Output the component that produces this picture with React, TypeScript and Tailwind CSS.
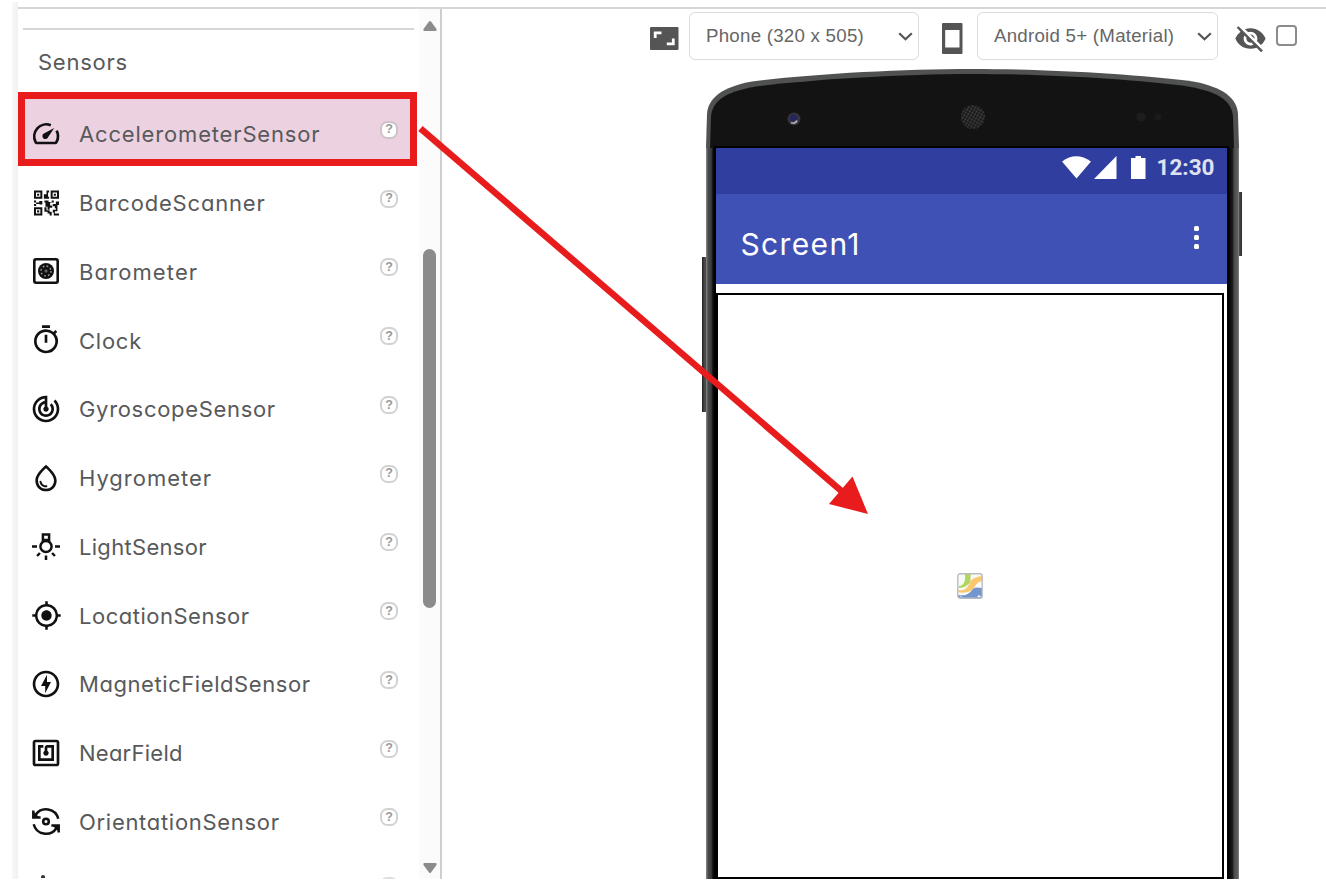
import type { ReactNode } from "react";
import {
  MdOutlineTimer,
  MdTrackChanges,
  MdOutlineWaterDrop,
  MdMyLocation,
  MdOutlineOfflineBolt,
  MdNfc,
  MdVisibilityOff,
} from "react-icons/md";

function QrIcon() {
  return (
    <svg width="25" height="26" viewBox="0 0 24 24" fill="#111">
      <path
        fillRule="evenodd"
        d="M0 0h8v8H0zM1.9 1.9v4.2h4.2V1.9zM16 0h8v8h-8zM17.9 1.9v4.2h4.2V1.9zM0 16h8v8H0zM1.9 17.9v4.2h4.2v-4.2z"
      />
      <path d="M3 3h2v2H3zM19 3h2v2h-2zM3 19h2v2H3zM12 0h2.500v2H12zM9.500 3.500h2.500V2h1.500v4h1v2H9.500zM0 9.500h2v2h3v-1.500h3v1.500h2V9.500h4v1.500h3V9.500h2v2h-3.500v3h2v2h-2.500v2h-2v-3h-2v-4H8v2H5.500V13H2v-1.500H0zM0 13h2v1.800H0zM18 13h3v-2.500h3V14h-1.500v3H20v-2h-2zM10 16h2v3h3v1.500h2V24h-2v-2h-2v-1.500h-3zM18 18.500h3V17h1.500v3H20v2h4v2h-5v-3h-1z" />
    </svg>
  );
}

function SpeedIcon() {
  return (
    <svg width="28" height="23" viewBox="0 0 28 23" fill="none" stroke="#111" strokeWidth="2.700">
      <path d="M18.800 3.200A12.200 12.200 0 0 0 3.600 20.200Q4 21 5 21H23Q24 21 24.400 20.200A12.200 12.200 0 0 0 24.600 8.600" />
      <path d="M22.200 6 16.200 15A3 3 0 1 1 12.400 11.200Z" fill="#111" stroke="none" />
    </svg>
  );
}

function BarometerIcon() {
  return (
    <svg width="26" height="26" viewBox="0 0 24 24" fill="none" stroke="#111">
      <rect x="1.200" y="1.200" width="21.600" height="21.600" rx="1.600" strokeWidth="2.400" />
      <circle cx="12" cy="12" r="7.400" fill="#111" stroke="none" />
      <circle cx="12" cy="12" r="4.600" stroke="#999" strokeWidth="1.300" strokeDasharray="1.600 2" />
      <circle cx="12" cy="12" r="1" stroke="#999" strokeWidth=".7" />
    </svg>
  );
}

function LampIcon() {
  return (
    <svg width="28" height="27" viewBox="0 0 28 27" fill="none" stroke="#111" strokeWidth="2.500">
      <circle cx="14" cy="13.500" r="5.600" />
      <path d="M10.900 9V1.600h6.200V9" />
      <path d="M10.500 7h7" />
      <path d="M0 13.500h5M23 13.500h5M14 22.500V27M7.900 20l-2.800 3M20.100 20l2.800 3" />
    </svg>
  );
}

function RotateIcon() {
  return (
    <svg width="28" height="29" viewBox="0 0 28 29" fill="none" stroke="#111" strokeWidth="2.500">
      <circle cx="14" cy="14.500" r="2.800" strokeWidth="2.600" />
      <path d="M26.300 11.800A12.600 12.600 0 0 0 3.500 8" />
      <path d="M1.700 17.200A12.600 12.600 0 0 0 24.500 21" />
      <path d="M1.300 3.500V10.500H8.600" />
      <path d="M26.700 25.500V18.500H19.400" />
      <path d="M1 4v7h7zM27 25v-7h-7z" fill="#111" stroke="none" />
    </svg>
  );
}

type Item = { label: string; icon: ReactNode; track: string; selected?: boolean };

const ITEMS: Item[] = [
  { label: "AccelerometerSensor", icon: <SpeedIcon />, track: "tracking-[0.830px]", selected: true },
  { label: "BarcodeScanner", icon: <QrIcon />, track: "tracking-[0.820px]" },
  { label: "Barometer", icon: <BarometerIcon />, track: "tracking-[1.120px]" },
  { label: "Clock", icon: <MdOutlineTimer size={32} />, track: "tracking-[0.750px]" },
  { label: "GyroscopeSensor", icon: <MdTrackChanges size={32} />, track: "tracking-[0.680px]" },
  { label: "Hygrometer", icon: <MdOutlineWaterDrop size={32} />, track: "tracking-[0.980px]" },
  { label: "LightSensor", icon: <LampIcon />, track: "tracking-[0.300px]" },
  { label: "LocationSensor", icon: <MdMyLocation size={31} />, track: "tracking-[0.510px]" },
  { label: "MagneticFieldSensor", icon: <MdOutlineOfflineBolt size={32} />, track: "tracking-[0.570px]" },
  { label: "NearField", icon: <MdNfc size={32} />, track: "tracking-[0.250px]" },
  { label: "OrientationSensor", icon: <RotateIcon />, track: "tracking-[0.700px]" },
];

function Help({ selected }: { selected?: boolean }) {
  return (
    <span
      className={`mb-[7px] flex h-[18px] w-[18px] items-center justify-center rounded-[7.500px] border-2 font-['Liberation_Sans',sans-serif] text-[12.500px] leading-none font-bold text-[#999] ${
        selected ? "border-[#cdc3c9] bg-white" : "border-[#d2d2d2]"
      }`}
    >
      ?
    </span>
  );
}

function PaletteRow({ label, icon, track, selected }: Item) {
  return (
    <li
      className={`flex shrink-0 items-center pr-[17px] pl-[11px] mr-[4px] ${
        selected ? "mb-[3.750px] h-[65px] bg-[#ecd1e1] pt-[3px]" : "h-[68.750px]"
      }`}
    >
      <span className="mt-px flex w-[34px] shrink-0 items-center justify-center text-[#111] [&_svg]:overflow-visible">
        {icon}
      </span>
      <span className={`mt-[2px] ml-[16px] flex-1 text-[22px] leading-none ${track}`}>{label}</span>
      <Help selected={selected} />
    </li>
  );
}

function Select({ label, className }: { label: string; className: string }) {
  return (
    <div
      className={`flex h-[48px] items-center justify-between rounded-[6px] border-[1.500px] border-[#dcdcdc] bg-white font-['Liberation_Sans',Arial,sans-serif] text-[18.700px] text-[#666] ${className}`}
    >
      <span className="whitespace-nowrap">{label}</span>
      <svg width="15" height="9" viewBox="0 0 15 9" fill="none" stroke="#555" strokeWidth="2.200">
        <path d="M1.200 1.200 7.500 7.300 13.800 1.200" />
      </svg>
    </div>
  );
}

function PhoneShell() {
  return (
    <svg className="absolute top-0 left-0" width="544" height="812" viewBox="700 67 544 812">
      <defs>
        <linearGradient id="rail" x1="706" x2="1239" y1="0" y2="0" gradientUnits="userSpaceOnUse">
          <stop offset="0" stopColor="#8b8b8b" />
          <stop offset=".004" stopColor="#4a4b4c" />
          <stop offset=".010" stopColor="#37393a" />
          <stop offset=".013" stopColor="#0d0d0d" />
          <stop offset=".018" stopColor="#000" />
          <stop offset=".980" stopColor="#000" />
          <stop offset=".988" stopColor="#1c1c1c" />
          <stop offset=".991" stopColor="#4c4c4e" />
          <stop offset=".997" stopColor="#5a5a5c" />
          <stop offset="1" stopColor="#888" />
        </linearGradient>
        <linearGradient id="side" x1="0" x2="1" y1="0" y2="0">
          <stop offset="0" stopColor="#222" />
          <stop offset=".5" stopColor="#505051" />
          <stop offset="1" stopColor="#2c2c2c" />
        </linearGradient>
        <pattern id="mesh" width="3" height="3" patternUnits="userSpaceOnUse" patternTransform="rotate(30)">
          <rect width="3" height="3" fill="#181818" />
          <circle cx="1.500" cy="1.500" r=".9" fill="#4b4b4b" />
        </pattern>
      </defs>
      <rect x="702" y="257" width="6" height="155" fill="url(#side)" />
      <rect x="1236" y="192" width="6" height="64" fill="url(#side)" />
      <path d="M706 879V147H1239V879Z" fill="url(#rail)" />
      <path
        d="M706 148L707 114C708 98 722 87 752 81.500C810 74 900 69 972 69S1135 74 1193 81.500C1223 87 1237 98 1238 114L1239 148Z"
        fill="#505151"
      />
      <path
        d="M710 148L711 117C712 101 725 92 756 86.500C812 79.500 900 74 972 74S1133 79 1188 86.500C1219 92 1232 101 1233 117L1234 148Z"
        fill="#131313"
      />
      <path d="M714 879V146H1229V879Z" fill="#000" />
      <circle cx="794" cy="119" r="6.500" fill="#36363a" />
      <circle cx="793.500" cy="118" r="3.500" fill="#24245e" />
      <path d="M791 122.500q4 2 6-2" stroke="#aaa" strokeWidth="1.800" fill="none" />
      <circle cx="973" cy="117" r="12" fill="url(#mesh)" />
      <circle cx="1141" cy="117" r="4.500" fill="#1d1d1d" />
      <circle cx="1158" cy="117" r="3.500" fill="#1b1b1b" />
    </svg>
  );
}

function MapIcon() {
  return (
    <svg width="26" height="26" viewBox="0 0 26 26">
      <rect x="1" y="1" width="24" height="24" rx="2" fill="#f8faf8" />
      <path d="M8 1h6c-1 3 0 6-1 8s-5 6-11 6v-2c4 0 7-4 6-12z" fill="#b2d55c" />
      <path d="M1 17c6 1 9-1 11-6s6-7 13-8v5c-5 1-6 4-8 7s-9 6-16 4z" fill="#fbc76e" />
      <path d="M1 22c8 1 11-1 14-5 2-3 5-3 10-2v10H1z" fill="#7397cd" />
      <path d="m20 24 2-2 2 2zM4 24.500 3 23l2.500 1z" fill="#fff" />
      <rect x=".8" y=".8" width="24.400" height="24.400" rx="2.500" fill="none" stroke="#b9bcc0" strokeWidth="1.400" />
    </svg>
  );
}

export default function App() {
  return (
    <div className="relative h-[883px] w-[1326px] overflow-hidden bg-white font-['Inter','Open_Sans',sans-serif] text-[#58595b] [font-feature-settings:'cv11']">
      <div className="flex h-[879px]">
        <div className="mt-[2px] ml-[12px] w-[6px] shrink-0 bg-gradient-to-r from-[#f8f8f8] to-[#f1f1f1]" />
        <div className="mt-[7px] flex min-w-0 flex-1 border-t-2 border-[#d6d6d6]">
          <aside className="flex w-[424px] shrink-0 border-r-2 border-[#cfcfcf]">
            <div className="w-[401px] overflow-hidden">
              <div className="mt-[19px] mr-[5px] ml-[5px] h-[2px] bg-[#d6d6d6]" />
              <h2 className="flex h-[69px] items-center pb-[4px] pl-[20px] text-[22px] tracking-[0.750px]">Sensors</h2>
              <ul className="flex flex-col">
                {ITEMS.map((item) => (
                  <PaletteRow key={item.label} {...item} />
                ))}
                <li className="flex h-[28px] justify-between pr-[21px] pl-[22px]">
                  <span className="mt-[20px] ml-[1px] h-[3px] w-[4px] rounded-t bg-[#333]" />
                  <span className="mt-[22px] h-[18px] w-[18px] rounded-[7px] border-2 border-[#dedede]" />
                </li>
              </ul>
            </div>
            <div className="flex w-[21px] flex-col items-center bg-[#fbfbfb]">
              <svg className="mt-[11px] shrink-0" width="16" height="12" viewBox="0 0 16 12" fill="#8b8b8b">
                <path d="M7 1.500q1-1 2 0l5.500 7.500q.8 2-1 2h-11q-1.800 0-1-2z" />
              </svg>
              <div className="mt-[217px] h-[359px] w-[13px] rounded-full bg-[#8b8b8b]" />
              <svg className="mt-[254px] shrink-0" width="16" height="12" viewBox="0 0 16 12" fill="#8b8b8b">
                <path d="M7 10.500q1 1 2 0l5.500-7.500q.8-2-1-2h-11q-1.800 0-1 2z" />
              </svg>
            </div>
          </aside>

          <main className="flex min-w-0 flex-1 flex-col">
            <div className="flex h-[58px] shrink-0 items-start pt-[3px] pl-[208px]">
              <svg className="mt-[15px]" width="29" height="23" viewBox="0 0 29 23">
                <rect width="28.500" height="23" rx="1" fill="#555" />
                <path d="M5.200 11V5.800h6.300M23.300 11.500v5.300h-6.500" fill="none" stroke="#fff" strokeWidth="2.800" />
              </svg>
              <Select label="Phone (320 x 505)" className="ml-[10px] w-[230px] pr-[5px] pl-[16px] tracking-[0.250px]" />
              <svg className="mt-[11px] ml-[23px]" width="21" height="31" viewBox="0 0 21 31">
                <path fillRule="evenodd" fill="#555" d="M0 1q0-1 1-1h18.500q1 0 1 1v29q0 1-1 1H1q-1 0-1-1zM3.200 7v17.500h14.300V7z" />
              </svg>
              <Select label="Android 5+ (Material)" className="ml-[14px] w-[241px] pr-[5px] pl-[16px] tracking-[0.250px]" />
              <MdVisibilityOff className="mt-[10px] ml-[16px] text-[#555]" size={33} />
              <span className="mt-[13px] ml-[9px] h-[21px] w-[21px] rounded-[4px] border-2 border-[#8c8c8c]" />
            </div>

            <div className="relative ml-[258px] h-[812px] w-[544px]">
              <PhoneShell />
              <div className="relative mt-[81px] ml-[15.500px] flex h-[731px] w-[511.500px] flex-col bg-white">
                <div className="flex h-[46px] shrink-0 items-start bg-[#303e9f] pt-[8px] pl-[346px] text-white">
                  <svg width="86" height="24" viewBox="0 0 86 24" fill="#fff">
                    <path d="M0 5.500Q14 -5 29 5.500L14.500 22.500Z" />
                    <path d="M32 23 54.500 0V23Z" />
                    <path d="M69 2h4.500V0h5.500v2h4.500v21H69z" />
                  </svg>
                  <span className="ml-[9px] font-[Roboto,sans-serif] text-[22.500px] leading-[23px] font-bold text-[#dfe1f1]">
                    12:30
                  </span>
                </div>
                <div className="flex h-[90px] shrink-0 items-center bg-[#3f51b5] pr-[28.500px] pl-[25px] text-white">
                  <span className="mt-[9px] flex-1 text-[30px] leading-none tracking-[1.350px]">Screen1</span>
                  <span className="mb-[3px] flex flex-col gap-[4px]">
                    <i className="h-[5px] w-[5px] rounded-[1.500px] bg-white" />
                    <i className="h-[5px] w-[5px] rounded-[1.500px] bg-white" />
                    <i className="h-[5px] w-[5px] rounded-[1.500px] bg-white" />
                  </span>
                </div>
                <div className="mt-[9px] mr-[3px] flex flex-1 items-center justify-center border-2 border-black">
                  <MapIcon />
                </div>
              </div>
            </div>
          </main>
        </div>
      </div>

      <div className="pointer-events-none absolute top-[92px] left-[18px] h-[74px] w-[399px] border-[7px] border-[#e81c1c]" />
      <svg className="pointer-events-none absolute top-0 left-0" width="1326" height="883" fill="#e81c1c">
        <path d="M420.500 128.500 842 491.500" stroke="#e81c1c" strokeWidth="6.500" />
        <path d="M868 514 829 504 852.500 476.500Z" />
      </svg>
    </div>
  );
}
